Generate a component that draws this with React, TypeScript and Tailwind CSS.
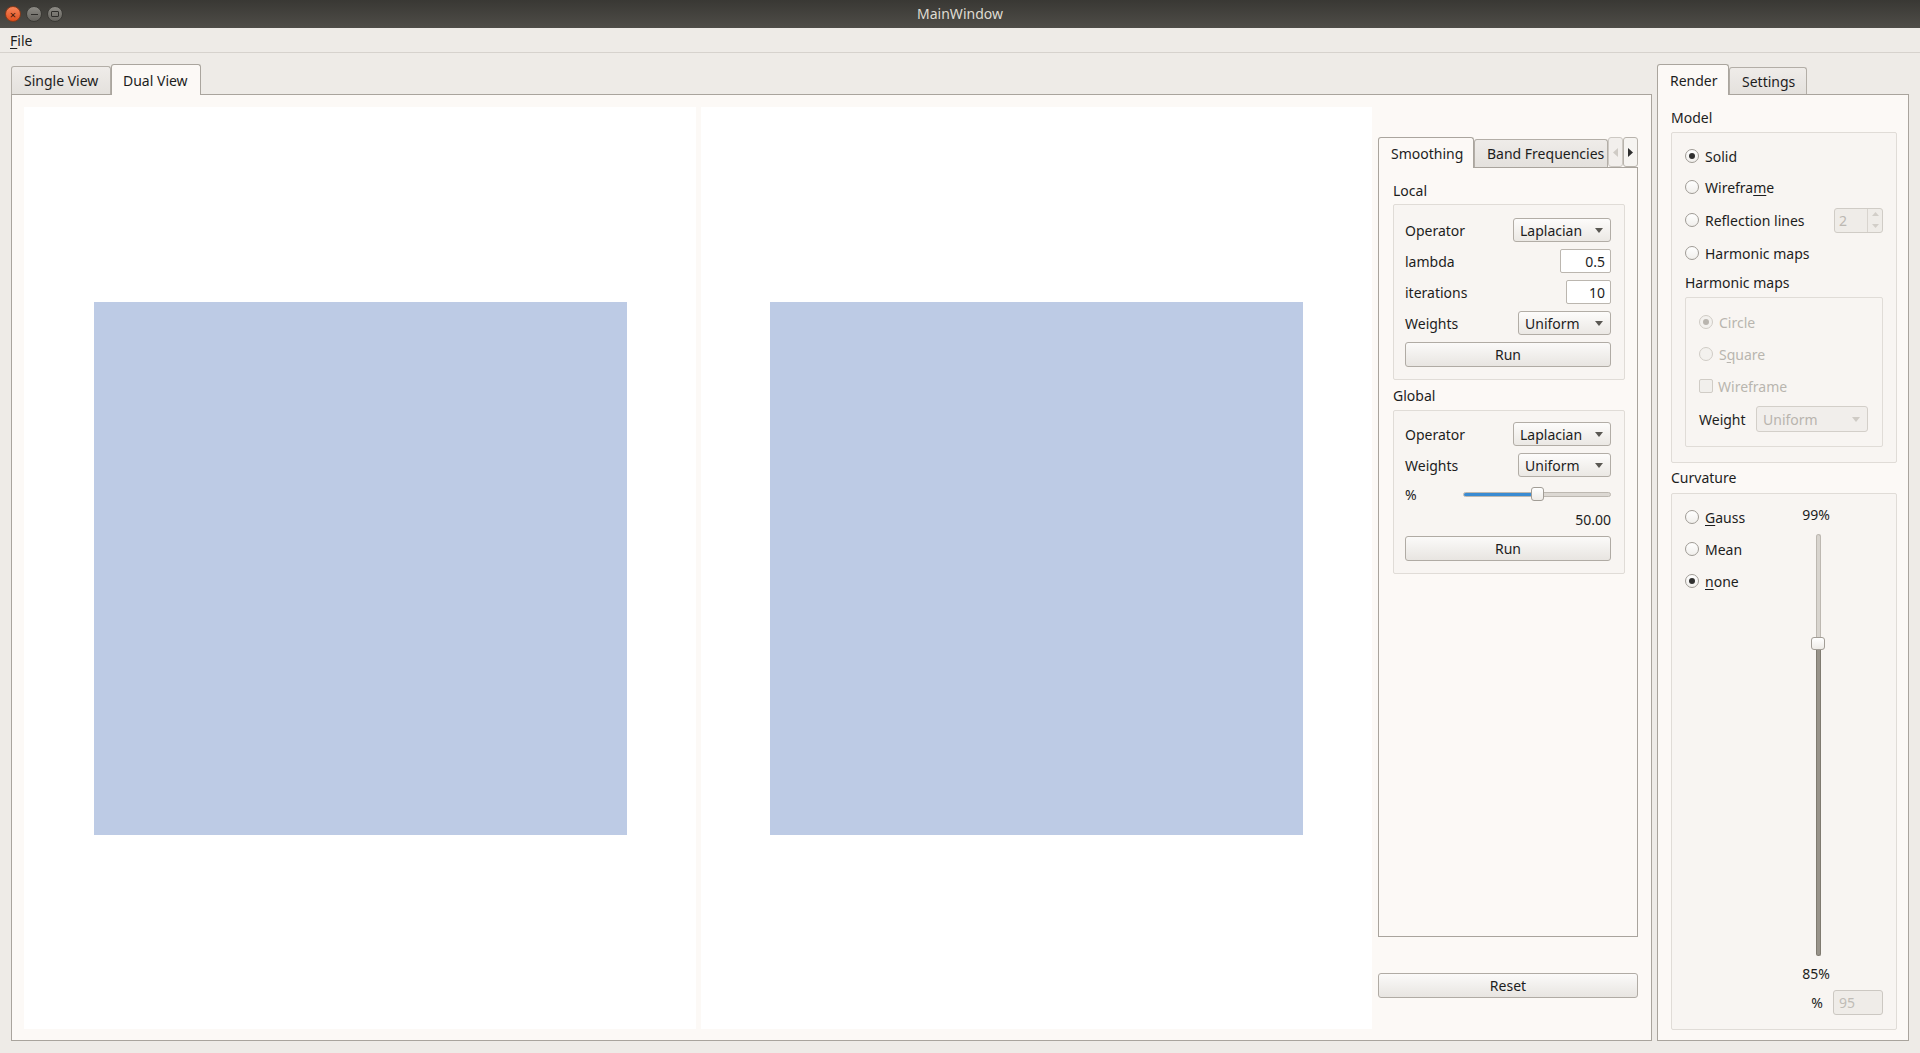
import React from "react";

function Caret({ disabled }: { disabled?: boolean }) {
    return (
        <svg width="8" height="5" viewBox="0 0 8 5">
            <path d="M0 0 L8 0 L4 5 Z" fill={disabled ? "#cfcbc5" : "#5a5853"} />
        </svg>
    );
}

function Radio({ checked, disabled }: { checked?: boolean; disabled?: boolean }) {
    return (
        <span
            className={
                "flex h-[14px] w-[14px] items-center justify-center rounded-full border " +
                (disabled
                    ? "border-[#d0ccc6] bg-[#f3f1ee]"
                    : "border-[#9f9b95] bg-gradient-to-b from-[#ffffff] to-[#f1efec]")
            }
        >
            {checked && (
                <span
                    className={
                        "h-[6px] w-[6px] rounded-full " +
                        (disabled ? "bg-[#b9b5af]" : "bg-[#303030]")
                    }
                />
            )}
        </span>
    );
}

function Combo({ text, w, disabled }: { text: string; w: string; disabled?: boolean }) {
    return (
        <div
            className={
                "flex h-[24px] items-center justify-between rounded-[3px] border pl-[6px] pr-[7px] " +
                w +
                (disabled
                    ? " border-[#d3cfc9] bg-[#f1eeeb] text-[#b8b4ae]"
                    : " border-[#b2ada6] bg-gradient-to-b from-[#fdfcfb] to-[#ebe8e4]")
            }
        >
            <span>{text}</span>
            <Caret disabled={disabled} />
        </div>
    );
}

function Field({ text, w }: { text: string; w: string }) {
    return (
        <div
            className={
                "flex h-[24px] items-center justify-end rounded-[2px] border border-[#bbb6af] bg-white pr-[5px] " +
                w
            }
        >
            {text}
        </div>
    );
}

function Button({ text }: { text: string }) {
    return (
        <div className="flex h-[25px] items-center justify-center rounded-[3px] border border-[#b0aba4] bg-gradient-to-b from-[#fbfaf9] to-[#e8e5e1]">
            {text}
        </div>
    );
}

function Row({ label, children }: { label: string; children: React.ReactNode }) {
    return (
        <div className="flex h-[24px] items-center justify-between">
            <span>{label}</span>
            {children}
        </div>
    );
}

function GroupBox({ className, children }: { className: string; children: React.ReactNode }) {
    return (
        <div className={"rounded-[2px] border border-[#e0dcd7] bg-[#f8f5f2] " + className}>
            {children}
        </div>
    );
}

function SmoothingPanel() {
    return (
        <div className="flex flex-col pl-[14px] pt-[13px]">
            <div className="h-[19px] pl-[-1px] leading-[19px]">Local</div>
            <GroupBox className="mt-[4px] flex w-[232px] flex-col gap-[7px] pb-[12px] pl-[11px] pr-[13px] pt-[13px]">
                <Row label="Operator">
                    <Combo text="Laplacian" w="w-[98px]" />
                </Row>
                <Row label="lambda">
                    <Field text="0.5" w="w-[51px]" />
                </Row>
                <Row label="iterations">
                    <Field text="10" w="w-[45px]" />
                </Row>
                <Row label="Weights">
                    <Combo text="Uniform" w="w-[93px]" />
                </Row>
                <Button text="Run" />
            </GroupBox>
            <div className="mt-[6px] h-[19px] leading-[19px]">Global</div>
            <GroupBox className="mt-[5px] flex w-[232px] flex-col pb-[12px] pl-[11px] pr-[13px] pt-[11px]">
                <Row label="Operator">
                    <Combo text="Laplacian" w="w-[98px]" />
                </Row>
                <div className="mt-[7px]">
                    <Row label="Weights">
                        <Combo text="Uniform" w="w-[93px]" />
                    </Row>
                </div>
                <div className="mt-[6px] flex h-[22px] items-center justify-between">
                    <span>%</span>
                    <div className="relative flex h-[16px] w-[148px] items-center">
                        <div className="flex h-[5px] w-full overflow-hidden rounded-full border border-[#bdb8b1] bg-[#dcd8d3]">
                            <div className="h-full w-[74px] bg-[#3a8bd2]" />
                        </div>
                        <div className="absolute left-[68px] top-[1px] h-[14px] w-[13px] rounded-[3px] border border-[#a29d96] bg-gradient-to-b from-white to-[#eeebe7]" />
                    </div>
                </div>
                <div className="mt-[4px] flex h-[20px] items-center justify-end">50.00</div>
                <div className="mt-[7px]">
                    <Button text="Run" />
                </div>
            </GroupBox>
        </div>
    );
}

function RenderPanel() {
    return (
        <div className="flex flex-col pl-[13px] pt-[13px]">
            <div className="h-[19px] leading-[19px]">Model</div>
            <GroupBox className="mt-[5px] flex h-[331px] w-[226px] flex-col pl-[13px] pr-[13px] pt-[13px]">
                <div className="flex h-[20px] items-center gap-[6px]">
                    <Radio checked />
                    <span>Solid</span>
                </div>
                <div className="mt-[11px] flex h-[20px] items-center gap-[6px]">
                    <Radio />
                    <span>
                        Wirefra<span className="underline underline-offset-2">m</span>e
                    </span>
                </div>
                <div className="mt-[13px] flex h-[20px] items-center justify-between">
                    <div className="flex items-center gap-[6px]">
                        <Radio />
                        <span>Reflection lines</span>
                    </div>
                    <div className="flex h-[25px] w-[49px] rounded-[3px] border border-[#d0ccc6] bg-[#efece8] text-[#bcb8b2]">
                        <span className="flex flex-1 items-center pl-[4px]">2</span>
                        <div className="flex w-[15px] flex-col border-l border-[#d8d4ce]">
                            <span className="flex flex-1 items-center justify-center">
                                <svg width="7" height="4" viewBox="0 0 7 4">
                                    <path d="M0 4 L7 4 L3.5 0 Z" fill="#d2cec8" />
                                </svg>
                            </span>
                            <span className="flex flex-1 items-center justify-center">
                                <svg width="7" height="4" viewBox="0 0 7 4">
                                    <path d="M0 0 L7 0 L3.5 4 Z" fill="#d2cec8" />
                                </svg>
                            </span>
                        </div>
                    </div>
                </div>
                <div className="mt-[13px] flex h-[20px] items-center gap-[6px]">
                    <Radio />
                    <span>Harmonic maps</span>
                </div>
                <div className="mt-[10px] h-[19px] leading-[19px]">Harmonic maps</div>
                <GroupBox className="mt-[5px] flex h-[150px] w-[198px] flex-col pl-[13px] pr-[14px] pt-[14px] text-[#b9b5af]">
                    <div className="flex h-[20px] items-center gap-[6px]">
                        <Radio checked disabled />
                        <span>Circle</span>
                    </div>
                    <div className="mt-[12px] flex h-[20px] items-center gap-[6px]">
                        <Radio disabled />
                        <span>
                            S<span className="underline underline-offset-2">q</span>uare
                        </span>
                    </div>
                    <div className="mt-[12px] flex h-[20px] items-center gap-[5px]">
                        <span className="h-[14px] w-[14px] rounded-[2px] border border-[#d0ccc6] bg-[#f1efec]" />
                        <span>Wireframe</span>
                    </div>
                    <div className="mt-[10px] flex h-[26px] items-center justify-between">
                        <span className="text-[#1d1d1d]">Weight</span>
                        <Combo text="Uniform" w="w-[112px] h-[26px]" disabled />
                    </div>
                </GroupBox>
            </GroupBox>
            <div className="mt-[5px] h-[19px] leading-[19px]">Curvature</div>
            <GroupBox className="mt-[6px] flex h-[537px] w-[226px] flex-col">
                <div className="flex">
                    <div className="flex w-[119px] flex-col pl-[13px] pt-[13px]">
                        <div className="flex h-[20px] items-center gap-[6px]">
                            <Radio />
                            <span>
                                <span className="underline underline-offset-2">G</span>auss
                            </span>
                        </div>
                        <div className="mt-[12px] flex h-[20px] items-center gap-[6px]">
                            <Radio />
                            <span>Mean</span>
                        </div>
                        <div className="mt-[12px] flex h-[20px] items-center gap-[6px]">
                            <Radio checked />
                            <span>
                                <span className="underline underline-offset-2">n</span>one
                            </span>
                        </div>
                    </div>
                    <div className="flex w-[50px] flex-col items-center pt-[11px]">
                        <div className="h-[19px] leading-[19px]">99%</div>
                        <div className="mt-[10px] flex h-[422px] w-full justify-center pl-[4px]">
                            <div className="relative flex h-full w-[5px] flex-col">
                                <div className="h-[103px] rounded-t-full border border-b-0 border-[#bdb8b1] bg-[#d8d4ce]" />
                                <div className="flex-1 rounded-b-full border border-t-0 border-[#7f7a70] bg-[#98938a]" />
                                <div className="absolute left-[-5px] top-[103px] h-[13px] w-[14px] rounded-[3px] border border-[#a29d96] bg-gradient-to-b from-white to-[#eeebe7]" />
                            </div>
                        </div>
                        <div className="mt-[8px] h-[19px] leading-[19px]">85%</div>
                    </div>
                </div>
                <div className="mt-[7px] flex items-center justify-end gap-[10px] pr-[13px]">
                    <span>%</span>
                    <div className="flex h-[25px] w-[50px] items-center rounded-[3px] border border-[#ccc8c2] bg-[#efece8] pl-[5px] text-[#c0bcb6]">
                        95
                    </div>
                </div>
            </GroupBox>
        </div>
    );
}

export default function App() {
    return (
        <div className="flex h-[1053px] w-[1920px] flex-col overflow-hidden bg-[#eeebe7] font-['Noto_Sans',sans-serif] text-[14px] text-[#1d1d1d]">
            {/* title bar */}
            <div className="relative flex h-[28px] items-center justify-center bg-gradient-to-b from-[#393834] to-[#4f4d48]">
                <div className="absolute left-[5px] top-[6px] flex gap-[5px]">
                    <span className="flex h-[16px] w-[16px] items-center justify-center rounded-full border border-[#8a3a1a] bg-gradient-to-b from-[#f78559] to-[#df4e1a] text-[11px] leading-none text-[#3a1608]">
                        ×
                    </span>
                    <span className="flex h-[16px] w-[16px] items-center justify-center rounded-full border border-[#3a3935] bg-gradient-to-b from-[#8d8b85] to-[#65635e]">
                        <span className="h-[1px] w-[7px] bg-[#2e2d2a]" />
                    </span>
                    <span className="flex h-[16px] w-[16px] items-center justify-center rounded-full border border-[#3a3935] bg-gradient-to-b from-[#8d8b85] to-[#65635e]">
                        <span className="h-[6px] w-[8px] rounded-[1px] border border-[#2e2d2a]" />
                    </span>
                </div>
                <span className="pb-[2px] text-[14px] text-[#dfdbd2]">MainWindow</span>
            </div>

            {/* menu bar */}
            <div className="flex h-[25px] items-center border-b border-[#d6d2cd] px-[10px]">
                <span>
                    <span className="underline underline-offset-2">F</span>ile
                </span>
            </div>

            <div className="flex gap-[5px] pl-[11px] pt-[11px]">
                {/* left tab widget */}
                <div className="flex w-[1641px] flex-col">
                    <div className="flex h-[30px] items-end">
                        <div className="flex h-[28px] w-[100px] items-center rounded-t-[3px] border border-b-0 border-[#b3aea7] bg-gradient-to-b from-[#efece9] to-[#e4e1dd] pl-[12px]">
                            Single View
                        </div>
                        <div className="relative z-10 -mb-px flex h-[31px] w-[90px] items-center rounded-t-[3px] border border-b-0 border-[#aaa59e] bg-[#fcf9f6] pl-[11px]">
                            Dual View
                        </div>
                    </div>
                    <div className="flex h-[947px] border border-[#a9a49d] bg-[#fcf9f6] pl-[12px] pt-[12px]">
                        <div className="flex h-[922px] w-[672px] items-center justify-center bg-white">
                            <div className="h-[533px] w-[533px] bg-[#bdcbe5]" />
                        </div>
                        <div className="ml-[5px] flex h-[922px] w-[671px] items-center justify-center bg-white">
                            <div className="h-[533px] w-[533px] bg-[#bdcbe5]" />
                        </div>
                        <div className="ml-[6px] flex w-[260px] flex-col pt-[30px]">
                            <div className="flex h-[30px] items-end">
                                <div className="relative z-10 -mb-px flex h-[31px] w-[96px] items-center rounded-t-[3px] border border-b-0 border-[#aaa59e] bg-[#fcf9f6] pl-[12px]">
                                    Smoothing
                                </div>
                                <div className="flex h-[28px] w-[134px] items-center rounded-t-[3px] border border-b-0 border-[#b3aea7] bg-gradient-to-b from-[#efece9] to-[#e4e1dd] pl-[12px]">
                                    Band Frequencies
                                </div>
                                <div className="flex h-[30px] w-[15px] items-center justify-center rounded-[3px] border border-[#cdc9c3] bg-[#f2efec]">
                                    <svg width="5" height="9" viewBox="0 0 5 9">
                                        <path d="M5 0 L5 9 L0 4.5 Z" fill="#cfcbc5" />
                                    </svg>
                                </div>
                                <div className="flex h-[30px] w-[15px] items-center justify-center rounded-[3px] border border-[#b8b3ac] bg-[#f6f4f1]">
                                    <svg width="5" height="9" viewBox="0 0 5 9">
                                        <path d="M0 0 L0 9 L5 4.5 Z" fill="#2e2e2e" />
                                    </svg>
                                </div>
                            </div>
                            <div className="h-[770px] border border-[#a9a49d] bg-[#fcf9f6]">
                                <SmoothingPanel />
                            </div>
                            <div className="mt-[36px]">
                                <Button text="Reset" />
                            </div>
                        </div>
                    </div>
                </div>

                {/* right tab widget */}
                <div className="flex w-[252px] flex-col">
                    <div className="flex h-[30px] items-end">
                        <div className="relative z-10 -mb-px flex h-[31px] w-[72px] items-center rounded-t-[3px] border border-b-0 border-[#aaa59e] bg-[#fcf9f6] pl-[12px]">
                            Render
                        </div>
                        <div className="flex h-[27px] w-[78px] items-center rounded-t-[3px] border border-b-0 border-[#b3aea7] bg-gradient-to-b from-[#efece9] to-[#e4e1dd] pl-[12px]">
                            Settings
                        </div>
                    </div>
                    <div className="h-[947px] border border-[#a9a49d] bg-[#fcf9f6]">
                        <RenderPanel />
                    </div>
                </div>
            </div>
        </div>
    );
}
